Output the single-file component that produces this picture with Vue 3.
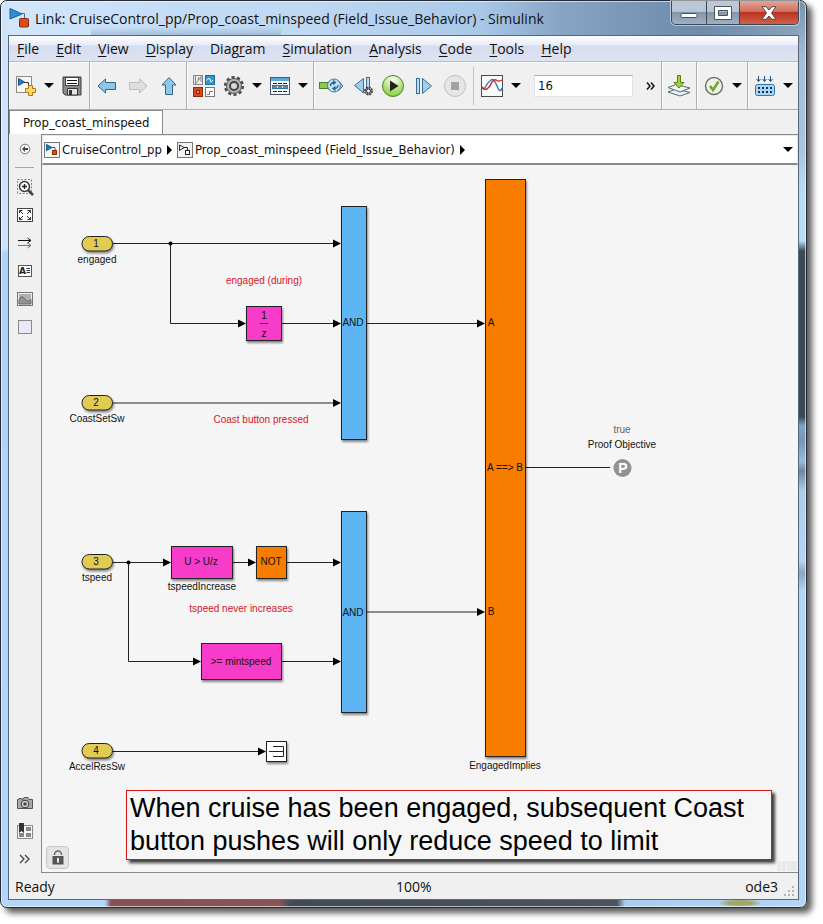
<script setup>
import { ref } from 'vue'

const stopTime = ref('16')

const menus = [
  ['', 'F', 'ile'],
  ['', 'E', 'dit'],
  ['', 'V', 'iew'],
  ['', 'D', 'isplay'],
  ['Diag', 'r', 'am'],
  ['', 'S', 'imulation'],
  ['', 'A', 'nalysis'],
  ['', 'C', 'ode'],
  ['', 'T', 'ools'],
  ['', 'H', 'elp'],
]

const ports = [
  { n: 1, y: 244, name: 'engaged' },
  { n: 2, y: 403, name: 'CoastSetSw' },
  { n: 3, y: 562, name: 'tspeed' },
  { n: 4, y: 751, name: 'AccelResSw' },
]

const blocks = [
  { x: 341, y: 206, w: 26, h: 234, fill: '#5eb5f3' },
  { x: 341, y: 511, w: 26, h: 202, fill: '#5eb5f3' },
  { x: 485, y: 179, w: 41, h: 578, fill: '#f87c00' },
  { x: 246, y: 306, w: 36, h: 35, fill: '#f63cc9' },
  { x: 171, y: 546, w: 62, h: 33, fill: '#f63cc9' },
  { x: 256, y: 546, w: 31, h: 33, fill: '#f87c00' },
  { x: 201, y: 643, w: 81, h: 37, fill: '#f63cc9' },
  { x: 266, y: 741, w: 21, h: 21, fill: '#ffffff' },
]

const wires = [
  'M113 243.5H334',
  'M170.5 244V323.5H239',
  'M282 323.5H334',
  'M113 403H334',
  'M367 323.5H478',
  'M367 612H478',
  'M113 562.5H165',
  'M128.5 562V661.5H194',
  'M233 562.5H249',
  'M287 562.5H334',
  'M282 661.5H334',
  'M113 751.5H259',
]

const heads = [
  [341, 243.5], [246, 323.5], [341, 323.5], [341, 403],
  [485, 323.5], [485, 612], [171, 562.5], [201, 661.5],
  [256, 562.5], [341, 562.5], [341, 661.5], [266, 751.5],
]

const labels = [
  { x: 353, y: 326, t: 'AND' },
  { x: 353, y: 616, t: 'AND' },
  { x: 264, y: 319, t: '1' },
  { x: 264, y: 337, t: 'z' },
  { x: 201, y: 565, t: 'U > U/z' },
  { x: 271, y: 565, t: 'NOT' },
  { x: 241, y: 665, t: '>= mintspeed' },
  { x: 202, y: 590, t: 'tspeedIncrease' },
  { x: 505, y: 769, t: 'EngagedImplies' },
  { x: 491, y: 326, t: 'A' },
  { x: 505, y: 471, t: 'A ==> B' },
  { x: 491, y: 615, t: 'B' },
  { x: 622, y: 448, t: 'Proof Objective' },
  { x: 622, y: 433, t: 'true', c: 'muted' },
  { x: 264, y: 284, t: 'engaged (during)', c: 'note' },
  { x: 261, y: 423, t: 'Coast button pressed', c: 'note' },
  { x: 241, y: 612, t: 'tspeed never increases', c: 'note' },
]
</script>

<template>
  <div class="desk">
    <div class="window">
      <header class="titlebar">
        <svg class="app-icon" width="20" height="20" viewBox="0 0 20 20" aria-hidden="true">
          <path d="M1 0.5L13 6L1 11Z" fill="#2f8fd0" stroke="#1c5c94" />
          <path d="M12 5.5H15.500V10" fill="none" stroke="#3c6f9c" />
          <rect x="10.500" y="10.500" width="9" height="8.500" rx="1" fill="#dd4a17" stroke="#8f2c0c" />
        </svg>
        <h1>Link: CruiseControl_pp/Prop_coast_minspeed (Field_Issue_Behavior) - Simulink</h1>
        <div class="caption">
          <button class="cap" aria-label="Minimize">
            <svg width="18" height="14" viewBox="0 0 18 14"><rect x="1" y="7.500" width="16" height="4" rx="1" fill="#fff" stroke="#4a545f" /></svg>
          </button>
          <button class="cap" aria-label="Maximize">
            <svg width="18" height="14" viewBox="0 0 18 14"><path fill-rule="evenodd" d="M0.500 0.500H17.500V13.500H0.500ZM4.500 4.500V9.500H13.500V4.500Z" fill="#fff" stroke="#4a545f" /></svg>
          </button>
          <button class="cap close" aria-label="Close">
            <svg width="16" height="14" viewBox="0 0 16 14"><path d="M1 .7H5L8 4L11 .7H15L10.500 7L15 13.300H11L8 10L5 13.300H1L5.500 7Z" fill="#fff" stroke="#5b4646" /></svg>
          </button>
        </div>
      </header>

      <main class="client">
        <nav class="menubar">
          <button v-for="m in menus" :key="m.join('')" class="menu">{{ m[0] }}<u>{{ m[1] }}</u>{{ m[2] }}</button>
        </nav>

        <div class="toolbar">
          <div class="group">
            <button class="tool" aria-label="New model">
              <svg width="22" height="22" viewBox="0 0 22 22">
                <rect x="1.500" y="1.500" width="15" height="16" fill="#f8f8f8" stroke="#8a8a8a" />
                <path d="M3.500 3.500L9.500 7L3.500 10.500Z" fill="#1e7fc4" stroke="#15588c" />
                <path d="M9 7.500H13.500V11" fill="none" stroke="#333" />
                <path d="M13.500 10.500H17.500V13.500H20.500V17.500H17.500V20.500H13.500V17.500H10.500V13.500H13.500Z" fill="#fbd864" stroke="#b07a10" />
              </svg>
            </button>
            <button class="drop" aria-label="New options"></button>
            <button class="tool" aria-label="Save">
              <svg width="20" height="20" viewBox="0 0 20 20">
                <path d="M1 1H19V19H3L1 17Z" fill="#8a8a8a" stroke="#3d3d3d" />
                <rect x="3.500" y="1.500" width="13" height="8" fill="#fff" stroke="#444" />
                <path d="M5 4.500H15M5 7.500H15" stroke="#111" />
                <path d="M5.500 19V12.500H15.500V19Z" fill="#e6e6e6" stroke="#333" />
                <rect x="7" y="14" width="3" height="5" fill="#333" />
              </svg>
            </button>
          </div>

          <div class="group nav-group">
            <button class="tool" aria-label="Back">
              <svg width="20" height="18" viewBox="0 0 20 18"><path d="M1 9L8.500 2V5.500H18.500V12.500H8.500V16Z" fill="#8fc6ea" stroke="#33658f" /></svg>
            </button>
            <button class="tool" aria-label="Forward">
              <svg width="20" height="18" viewBox="0 0 20 18"><path d="M19 9L11.500 2V5.500H1.500V12.500H11.500V16Z" fill="#dedede" stroke="#bdbdbd" /></svg>
            </button>
            <button class="tool" aria-label="Up to parent">
              <svg width="18" height="20" viewBox="0 0 18 20"><path d="M9 1.500L16 9H12.500V18.500H5.500V9H2Z" fill="#8fc6ea" stroke="#33658f" /></svg>
            </button>
          </div>

          <div class="group">
            <button class="tool" aria-label="Library browser">
              <svg width="22" height="22" viewBox="0 0 22 22">
                <rect x=".5" y=".5" width="9" height="9" fill="#eee" stroke="#888" /><path d="M2.500 1V9M2.500 9L8 2M5.500 2V5M8 1V7" fill="none" stroke="#888" />
                <rect x="12.500" y=".5" width="9" height="9" fill="#2b98d2" stroke="#1a6da3" /><path d="M13.500 5.500L15 3.500L17 4L18 7L20 5" fill="none" stroke="#fff" />
                <rect x=".5" y="12.500" width="9" height="9" fill="#d9481a" stroke="#8f2c0c" /><rect x="3.500" y="15.500" width="3" height="3" fill="#f0865f" stroke="#81280b" />
                <rect x="12.500" y="12.500" width="9" height="9" fill="#fff" stroke="#777" /><path d="M14 19.500H16.500V16.500H20" fill="none" stroke="#777" />
              </svg>
            </button>
            <button class="tool" aria-label="Model configuration">
              <svg width="22" height="22" viewBox="0 0 22 22">
                <circle cx="11" cy="11" r="8.800" fill="none" stroke="#4b4b4b" stroke-width="2.500" stroke-dasharray="3.200 2.330" />
                <circle cx="11" cy="11" r="7.500" fill="#b5b5b5" stroke="#555" />
                <circle cx="11" cy="11" r="4" fill="#d8d8d8" stroke="#444" stroke-width="2" />
              </svg>
            </button>
            <button class="drop" aria-label="Configuration options"></button>
            <button class="tool" aria-label="Model explorer">
              <svg width="20" height="20" viewBox="0 0 20 20">
                <rect x=".5" y="1.500" width="19" height="17" fill="#f7f7f7" stroke="#4a5763" />
                <rect x="1" y="2" width="18" height="3" fill="#5ba7d9" />
                <rect x="2.500" y="9.500" width="15" height="3" fill="#cfe5f5" stroke="#2c76ad" />
                <path d="M3 7.500H17M3 11H17M3 15.500H17" stroke="#222" stroke-dasharray="4 1" />
              </svg>
            </button>
            <button class="drop" aria-label="Explorer options"></button>
          </div>

          <div class="group run-group">
            <button class="tool" aria-label="Update diagram">
              <svg width="26" height="20" viewBox="0 0 26 20">
                <rect x="1.500" y="6.500" width="9" height="6" fill="#8dc852" stroke="#4b7d25" />
                <path d="M20 4.500L25 10L20 15Z" fill="#b4d8f0" stroke="#3b759f" />
                <circle cx="16" cy="9.500" r="6.500" fill="#c4e0f4" stroke="#3b759f" />
                <path d="M12.500 10Q12.500 6.500 16.500 6.500M15 4.500L17.500 6.500L15 8.500M20 9Q20 12.500 16 12.500M17.500 10.500L15 12.500L17.500 14.500" fill="none" stroke="#28648f" stroke-width="1.300" />
              </svg>
            </button>
            <button class="tool" aria-label="Step back">
              <svg width="26" height="20" viewBox="0 0 26 20">
                <path d="M14.500 2.500V17L5.500 9.500Z" fill="#9fcdea" stroke="#3b6d96" />
                <rect x="17.500" y="1.500" width="3" height="13" fill="#b8dcf2" stroke="#3b6d96" />
                <circle cx="19.500" cy="15" r="3.500" fill="#ddd" stroke="#444" stroke-width="2" stroke-dasharray="2 .7" />
                <circle cx="19.500" cy="15" r="2" fill="#fff" stroke="#333" />
              </svg>
            </button>
            <button class="tool" aria-label="Run">
              <svg width="24" height="24" viewBox="0 0 24 24">
                <defs><radialGradient id="run" cx=".5" cy=".2" r=".8"><stop offset="0" stop-color="#fbfff2" /><stop offset="1" stop-color="#83cf38" /></radialGradient></defs>
                <circle cx="12" cy="12" r="10.500" fill="url(#run)" stroke="#4f8528" /><path d="M9 6.500L17.500 12L9 17.500Z" fill="#222" />
              </svg>
            </button>
            <button class="tool" aria-label="Step forward">
              <svg width="18" height="18" viewBox="0 0 18 18"><rect x="1.500" y="1.500" width="3" height="15" fill="#b8dcf2" stroke="#3b6d96" /><path d="M7.500 1.500L16.500 9L7.500 16.500Z" fill="#9fcdea" stroke="#3b6d96" /></svg>
            </button>
            <button class="tool" aria-label="Stop">
              <svg width="24" height="24" viewBox="0 0 24 24"><circle cx="12" cy="12" r="10.500" fill="#e6e6e6" stroke="#c2c2c2" /><rect x="8" y="8" width="8" height="8" fill="#a3a3a3" /></svg>
            </button>
            <span class="divider"></span>
            <button class="tool" aria-label="Data inspector">
              <svg width="22" height="22" viewBox="0 0 22 22">
                <rect x=".5" y=".5" width="21" height="21" fill="#fafafa" stroke="#4c4c4c" />
                <path d="M1 13Q3 15 5 11T10 5Q13 3 16 11T21 13" fill="none" stroke="#3182bd" stroke-width="1.500" />
                <path d="M1 12Q3 15 6 14Q9 12 11 7Q13 4 15 5Q18 7 21 5" fill="none" stroke="#d12a24" stroke-width="1.500" />
              </svg>
            </button>
            <button class="drop" aria-label="Inspector options"></button>
            <input v-model="stopTime" class="stop-time" type="text" aria-label="Simulation stop time" />
            <button class="drop more" aria-label="More tools">
              <svg width="10" height="8" viewBox="0 0 10 8"><path d="M1 .5L4 4L1 7.500M5 .5L8 4L5 7.500" fill="none" stroke="#111" stroke-width="1.500" /></svg>
            </button>
          </div>

          <div class="group">
            <button class="tool" aria-label="Deploy">
              <svg width="24" height="24" viewBox="0 0 24 24">
                <path d="M1 18L9 15L23 18.500L13 22Z" fill="#eef5f8" stroke="#4f6b75" />
                <path d="M1 13.500L9 10.500L23 14L13 18Z" fill="#eef5f8" stroke="#4f6b75" />
                <path d="M10.500 1.500H13.500V8.500H17L12 14L7 8.500H10.500Z" fill="#a4d437" stroke="#577d13" />
              </svg>
            </button>
          </div>
          <div class="group">
            <button class="tool" aria-label="Model advisor">
              <svg width="20" height="20" viewBox="0 0 20 20"><circle cx="10" cy="10" r="8.500" fill="#eef2e9" stroke="#6c7568" stroke-width="1.500" /><path d="M6 10L9 14L14.500 5.500" fill="none" stroke="#6fa52c" stroke-width="2.500" /></svg>
            </button>
            <button class="drop" aria-label="Advisor options"></button>
          </div>
          <div class="group">
            <button class="tool" aria-label="Build">
              <svg width="22" height="22" viewBox="0 0 22 22">
                <path d="M4.500 1V6M10.500 1V6M16.500 1V6M2.500 4L4.500 6.500L6.500 4M8.500 4L10.500 6.500L12.500 4M14.500 4L16.500 6.500L18.500 4" fill="none" stroke="#174f86" />
                <rect x="1.500" y="9.500" width="19" height="11" rx="2" fill="#a9d5f2" stroke="#2c76ad" />
                <path d="M4 13H19M4 17H19" stroke="#10355c" stroke-width="2" stroke-dasharray="2 2" />
              </svg>
            </button>
            <button class="drop" aria-label="Build options"></button>
          </div>
        </div>

        <div class="tabs"><button class="tab">Prop_coast_minspeed</button></div>

        <div class="work">
          <aside class="palette">
            <button class="side" aria-label="Hide browser">
              <svg width="12" height="12" viewBox="0 0 12 12"><circle cx="6" cy="6" r="4.800" fill="#f6f6f6" stroke="#777" /><path d="M6 3L3 6L6 9V7H9V5H6Z" fill="#444" /></svg>
            </button>
            <span class="rule"></span>
            <button class="side" aria-label="Zoom">
              <svg width="18" height="18" viewBox="0 0 18 18"><rect x="1.500" y="1.500" width="14" height="14" fill="none" stroke="#888" stroke-dasharray="2 1.500" /><circle cx="8.500" cy="8.500" r="5" fill="#fff" stroke="#333" stroke-width="1.400" /><path d="M6 8.500H11M8.500 6V11" stroke="#222" stroke-width="1.400" /><path d="M12 12L17 17" stroke="#444" stroke-width="2.500" /></svg>
            </button>
            <button class="side" aria-label="Fit to view">
              <svg width="16" height="14" viewBox="0 0 16 14"><rect x=".5" y=".5" width="15" height="13" fill="#fff" stroke="#444" /><path d="M2.500 5V2.500H5.500M2.500 2.500L6 6M10.500 2.500H13.500V5M13.500 2.500L10 6M2.500 9V11.500H5.500M2.500 11.500L6 8M13.500 9V11.500H10.500M13.500 11.500L10 8" fill="none" stroke="#333" /></svg>
            </button>
            <button class="side" aria-label="Signals">
              <svg width="16" height="12" viewBox="0 0 16 12"><path d="M1 3.500H14M10.500 1L14 3.500L10.500 6" fill="none" stroke="#111" /><path d="M1 8.500H14M10.500 6L14 8.500L10.500 11" fill="none" stroke="#777" /></svg>
            </button>
            <button class="side" aria-label="Annotation">
              <svg width="14" height="12" viewBox="0 0 14 12"><rect x=".5" y=".5" width="13" height="11" fill="#fff" stroke="#555" /><text x="1" y="9" class="glyph">A</text><path d="M8.500 3.500H12M8.500 5.500H12M8.500 7.500H12" stroke="#333" /></svg>
            </button>
            <button class="side" aria-label="Image">
              <svg width="16" height="14" viewBox="0 0 16 14"><rect x=".5" y=".5" width="15" height="13" fill="#eee" stroke="#777" /><rect x="2" y="2" width="12" height="10" fill="#b0b0b0" /><path d="M2 8Q4 3.500 6 5T9 8.500T14 7.500V12H2Z" fill="#969696" stroke="#666" /></svg>
            </button>
            <button class="side" aria-label="Area">
              <svg width="14" height="14" viewBox="0 0 14 14"><rect x=".5" y=".5" width="13" height="13" fill="#e8e8f8" stroke="#888" /></svg>
            </button>
            <span class="grow"></span>
            <button class="side" aria-label="Screenshot">
              <svg width="16" height="14" viewBox="0 0 16 14"><path d="M.5 3.500H2V2.500H5V3.500H6L7 1.500H11L12 3.500H15.500V12.500H.5Z" fill="#aaa" stroke="#555" /><circle cx="8" cy="8" r="3.800" fill="#ddd" stroke="#333" /><circle cx="8" cy="8" r="1.800" fill="#444" /></svg>
            </button>
            <button class="side" aria-label="Bookmarks">
              <svg width="16" height="16" viewBox="0 0 16 16"><rect x=".5" y="2.500" width="15" height="13" fill="#f7f7f7" stroke="#888" /><path d="M9 4H14V8H9ZM9 10H14V14H9ZM2 10H7V14H2Z" fill="#888" /><path d="M2 0H7V10L4.500 8L2 10Z" fill="#333" /></svg>
            </button>
            <button class="side" aria-label="Expand palette">
              <svg width="12" height="10" viewBox="0 0 12 10"><path d="M1 1L5 5L1 9M6 1L10 5L6 9" fill="none" stroke="#444" stroke-width="1.300" /></svg>
            </button>
          </aside>

          <section class="editor">
            <nav class="crumbs" aria-label="Model path">
              <svg width="16" height="16" viewBox="0 0 16 16"><rect x=".5" y=".5" width="15" height="15" fill="#f4f4f4" stroke="#777" /><path d="M2.500 2.500L8 5.500L2.500 8.500Z" fill="#1e7fc4" stroke="#15588c" /><path d="M8 5.500H11V9" fill="none" stroke="#555" /><rect x="8.500" y="8.500" width="4" height="4" fill="#dd4a17" stroke="#8f2c0c" /></svg>
              <a href="#">CruiseControl_pp</a>
              <span class="sep"></span>
              <svg width="16" height="16" viewBox="0 0 16 16"><rect x=".5" y=".5" width="15" height="15" fill="#f4f4f4" stroke="#777" /><path d="M2.500 3L7 5.500L2.500 8.500Z" fill="#fff" stroke="#222" /><path d="M7 5.500H10.500V9" fill="none" stroke="#222" /><rect x="8.500" y="8.500" width="4" height="4" fill="#fff" stroke="#222" /></svg>
              <a href="#">Prop_coast_minspeed (Field_Issue_Behavior)</a>
              <span class="sep"></span>
              <button class="drop path-drop" aria-label="Path history"></button>
            </nav>

            <div class="canvas">
              <svg class="diagram" width="757" height="709" viewBox="42 165 757 709">
                <path v-for="w in wires" :key="w" :d="w" class="wire" />
                <path d="M526 467.500H610" class="wire" />
                <path v-for="(h, i) in heads" :key="i" :d="`M${h[0]} ${h[1]}l-8 -4v8z`" />
                <circle cx="170.500" cy="243.500" r="2" /><circle cx="128.500" cy="562.500" r="2" />
                <g class="solid">
                  <rect v-for="(b, i) in blocks" :key="i" :x="b.x + 0.5" :y="b.y + 0.5" :width="b.w - 1" :height="b.h - 1" :fill="b.fill" class="block" />
                  <rect v-for="p in ports" :key="p.n" x="82" :y="p.y - 7.5" width="30.500" height="14.500" rx="7.250" fill="#e1cb52" class="block" />
                </g>
                <template v-for="p in ports" :key="p.name">
                  <text x="96" :y="p.y + 3">{{ p.n }}</text>
                  <text x="97" :y="p.y + 19">{{ p.name }}</text>
                </template>
                <path d="M260 323.500H268M269 751.500H283M273 746.500H283.500V756.500H273" class="wire" />
                <circle cx="622.500" cy="468" r="9" fill="#929292" />
                <text x="623" y="473" class="proof">P</text>
                <text v-for="(l, i) in labels" :key="i" :x="l.x" :y="l.y" :class="l.c">{{ l.t }}</text>
              </svg>
              <p class="annotation">When cruise has been engaged, subsequent Coast button pushes will only reduce speed to limit</p>
              <button class="lock" aria-label="Lock">
                <svg width="12" height="16" viewBox="0 0 12 16"><path d="M2.500 5V4.500A3.500 3.500 0 0 1 9.500 4.500V5" fill="none" stroke="#666" stroke-width="1.500" /><rect x=".5" y="6" width="11" height="8.500" fill="#555" /><path d="M5 8H7V10.500L6.500 13H5.500L5 10.500Z" fill="#fff" /></svg>
              </button>
              <span class="corner"></span>
            </div>
          </section>
        </div>

        <footer class="status">
          <span class="ready">Ready</span><span class="zoom">100%</span><span class="solver">ode3</span>
          <svg width="12" height="12" viewBox="0 0 12 12" aria-hidden="true"><path d="M8 0h2v2h-2zM8 4h2v2h-2zM8 8h2v2h-2zM4 4h2v2h-2zM4 8h2v2h-2zM0 8h2v2h-2z" fill="#b5b5b5" /></svg>
        </footer>
      </main>
    </div>
  </div>
</template>

<style>
body { margin: 0; background: #fff; }
</style>

<style scoped>
* { box-sizing: border-box; }
button { margin: 0; padding: 0; border: 0; background: none; font: inherit; color: inherit; }
svg { display: block; flex: none; }
.desk { display: flex; height: 100vh; padding: 0 16px 16px 0; overflow: hidden; }
.window {
  flex: 1; min-width: 0; display: flex; flex-direction: column; padding: 0 7px 7px 7px;
  border: 1px solid #262b33; border-radius: 7px;
  background:
    radial-gradient(ellipse at center, #a2a768 40%, transparent 75%) 718px 100% / 42px 8px no-repeat,
    linear-gradient(90deg, #b3d5f8 0 104px, #85504f 110px, #8a5655 278px, #3f4b57 290px, #4b5562 616px, #a9ccf0 624px, #b3d5f8) bottom / 100% 7px no-repeat,
    linear-gradient(180deg, #7892ad 0, #a3bfdb 60px, #a9c4df 150px, #b9dcf5 190px, #b9dcf5 240px, #3d4a55 250px, #3d4a55 416px, #7fa6cc 425px, #7795b5 440px, #94bce2 460px, #72869e 470px, #adccea 490px, #b3d5f3 560px, #8ea3be 572px, #b3d5f8 590px, #b3d5f8) right / 8px 100% no-repeat,
    linear-gradient(180deg, #cfe4fb 0, #cfe4fb 247px, #b0d2f7 252px, #b3d5f8) left / 8px 100% no-repeat,
    linear-gradient(180deg, transparent 0 26px, rgba(130, 160, 190, .5) 34px) 90px 0 / 190px 36px no-repeat,
    linear-gradient(90deg, #d3e7fb 0, #c3dcf6 180px, #c0d9f3 300px, #a9c8e8 480px, #87a4c3 560px, #6e8aab 700px, #8ba5bf);
  box-shadow: inset 0 0 0 1px rgba(255, 255, 255, .6), 5px 5px 6px rgba(0, 0, 0, .65);
  font-family: "Open Sans", "Noto Sans", sans-serif; color: #111;
}
.titlebar { display: flex; height: 34px; }
.app-icon { margin: 7px 6px 0 1px; }
h1 { flex: 1; margin: 0; font-size: 14px; line-height: 36px; font-weight: 400; white-space: nowrap; overflow: hidden; }
.caption { display: flex; height: 24px; border: 1px solid #3c4854; border-top: 0; border-radius: 0 0 5px 5px; overflow: hidden; box-shadow: 0 0 0 1px rgba(255, 255, 255, .5); }
.cap { display: grid; place-items: center; width: 35px; border-right: 1px solid #3c4854; background: linear-gradient(#b9c7d6 45%, #8496aa 50%, #9db1c4); }
.cap + .cap { width: 33px; }
.cap.close { width: 58px; border-right: 0; background: linear-gradient(#e0a598 0, #d2715f 45%, #b93421 50%, #d0604a); }

.client { flex: 1; min-height: 0; display: flex; flex-direction: column; border: 1px solid #586676; background: #f0f0f0; }
.menubar { flex: none; display: flex; gap: 17px; height: 26px; padding: 0 8px; border-bottom: 1px solid #b4b9cc; background: linear-gradient(#fdfdff 0, #e9edf8 35%, #d6dcef 40%, #dfe4f3); font-size: 14px; line-height: 25px; }
.menu u { text-underline-offset: 2px; }

.toolbar { flex: none; display: flex; height: 48px; border-bottom: 1px solid #b0b0b0; }
.group { display: flex; align-items: center; padding: 0 2px; border-right: 1px solid #b0b0b0; box-shadow: inset 1px 1px #fbfbfb; }
.group:last-child { border-right: 0; }
.nav-group { gap: 1px; }
.run-group { flex: 1; min-width: 0; gap: 1px; }
.tool { display: grid; place-items: center; flex: none; width: 30px; height: 32px; }
.drop { display: grid; place-items: center; flex: none; width: 16px; height: 24px; }
.drop:empty::before { content: ""; border: 5px solid transparent; border-top-color: #000; border-bottom: 0; }
.divider { width: 1px; height: 38px; margin: 0 2px; background: #c3c3c3; }
.stop-time { flex: 1; min-width: 0; height: 22px; margin: 0 9px; padding: 0 3px; border: 1px solid #dfe3ea; border-top-color: #abadb3; background: #fff; font: 13px "DejaVu Sans Condensed", "DejaVu Sans", sans-serif; color: #111; }

.tabs { flex: none; display: flex; height: 24px; }
.tab { padding: 0 13px; border: 1px solid #858a92; border-bottom: 0; background: #fff; font: 13px "DejaVu Sans Condensed", "DejaVu Sans", sans-serif; }
.work { flex: 1; min-height: 0; display: flex; }
.palette { flex: none; width: 32px; display: flex; flex-direction: column; padding-top: 1px; }
.side { display: grid; place-items: center; height: 28px; flex: none; }
.rule { height: 1px; margin: 4px 7px 5px 6px; background: #a9a9a9; }
.grow { flex: 1; }
.glyph { font: bold 9px "DejaVu Sans", sans-serif; fill: #222; }
.editor { flex: 1; min-width: 0; display: flex; flex-direction: column; border: 1px solid #858a92; border-right: 0; }
.crumbs { flex: none; display: flex; align-items: center; height: 30px; padding: 0 1px; gap: 2px; border: 1px solid #e8e8e8; border-bottom: 2px solid #858a92; background: #fff; font: 13px "DejaVu Sans Condensed", "DejaVu Sans", sans-serif; white-space: nowrap; }
.crumbs a { color: #111; text-decoration: none; }
.sep { margin: 0 3px; border: 5px solid transparent; border-left-color: #000; border-right: 0; }
.path-drop { margin-left: auto; }

.canvas { flex: 1; min-height: 0; position: relative; overflow: hidden; background: #f5f5f5; }
.diagram text { font: 10px "Liberation Sans", Arial, sans-serif; text-anchor: middle; fill: #111; }
.diagram text.note { fill: #d8142a; }
.diagram text.muted { fill: #666; }
.diagram text.proof { font: bold 14px "Liberation Sans", Arial, sans-serif; fill: #fff; }
.wire { fill: none; stroke: #222; }
.block { stroke: #222; }
.solid { filter: drop-shadow(1px 2px 1px rgba(0, 0, 0, .45)); }
.annotation { position: absolute; left: 84px; bottom: 12px; width: 646px; margin: 0; padding: 1px 3px; border: 1px solid #d01818; background: #f6f6f6; box-shadow: 3px 3px 3px rgba(0, 0, 0, .75); font: 27px/33px "Liberation Sans", Arial, sans-serif; color: #000; }
.lock { position: absolute; left: 4px; bottom: 3px; width: 23px; height: 23px; display: grid; place-items: center; border: 1px solid #c6c6c6; border-radius: 4px; background: #e4e4e4; }
.corner { position: absolute; right: 1px; bottom: 1px; width: 20px; height: 10px; background: linear-gradient(90deg, #e9e9e9 4px, #f5f5f5 4px 5px, #e9e9e9 5px 9px, #f5f5f5 9px 10px, #e9e9e9 10px); }

.status { flex: none; display: flex; align-items: center; height: 26px; padding: 0 2px 0 6px; font-size: 14px; }
.ready { flex: 11; }
.solver { flex: 10; text-align: right; }
.status svg { align-self: flex-end; margin: 0 0 1px 6px; }
</style>
